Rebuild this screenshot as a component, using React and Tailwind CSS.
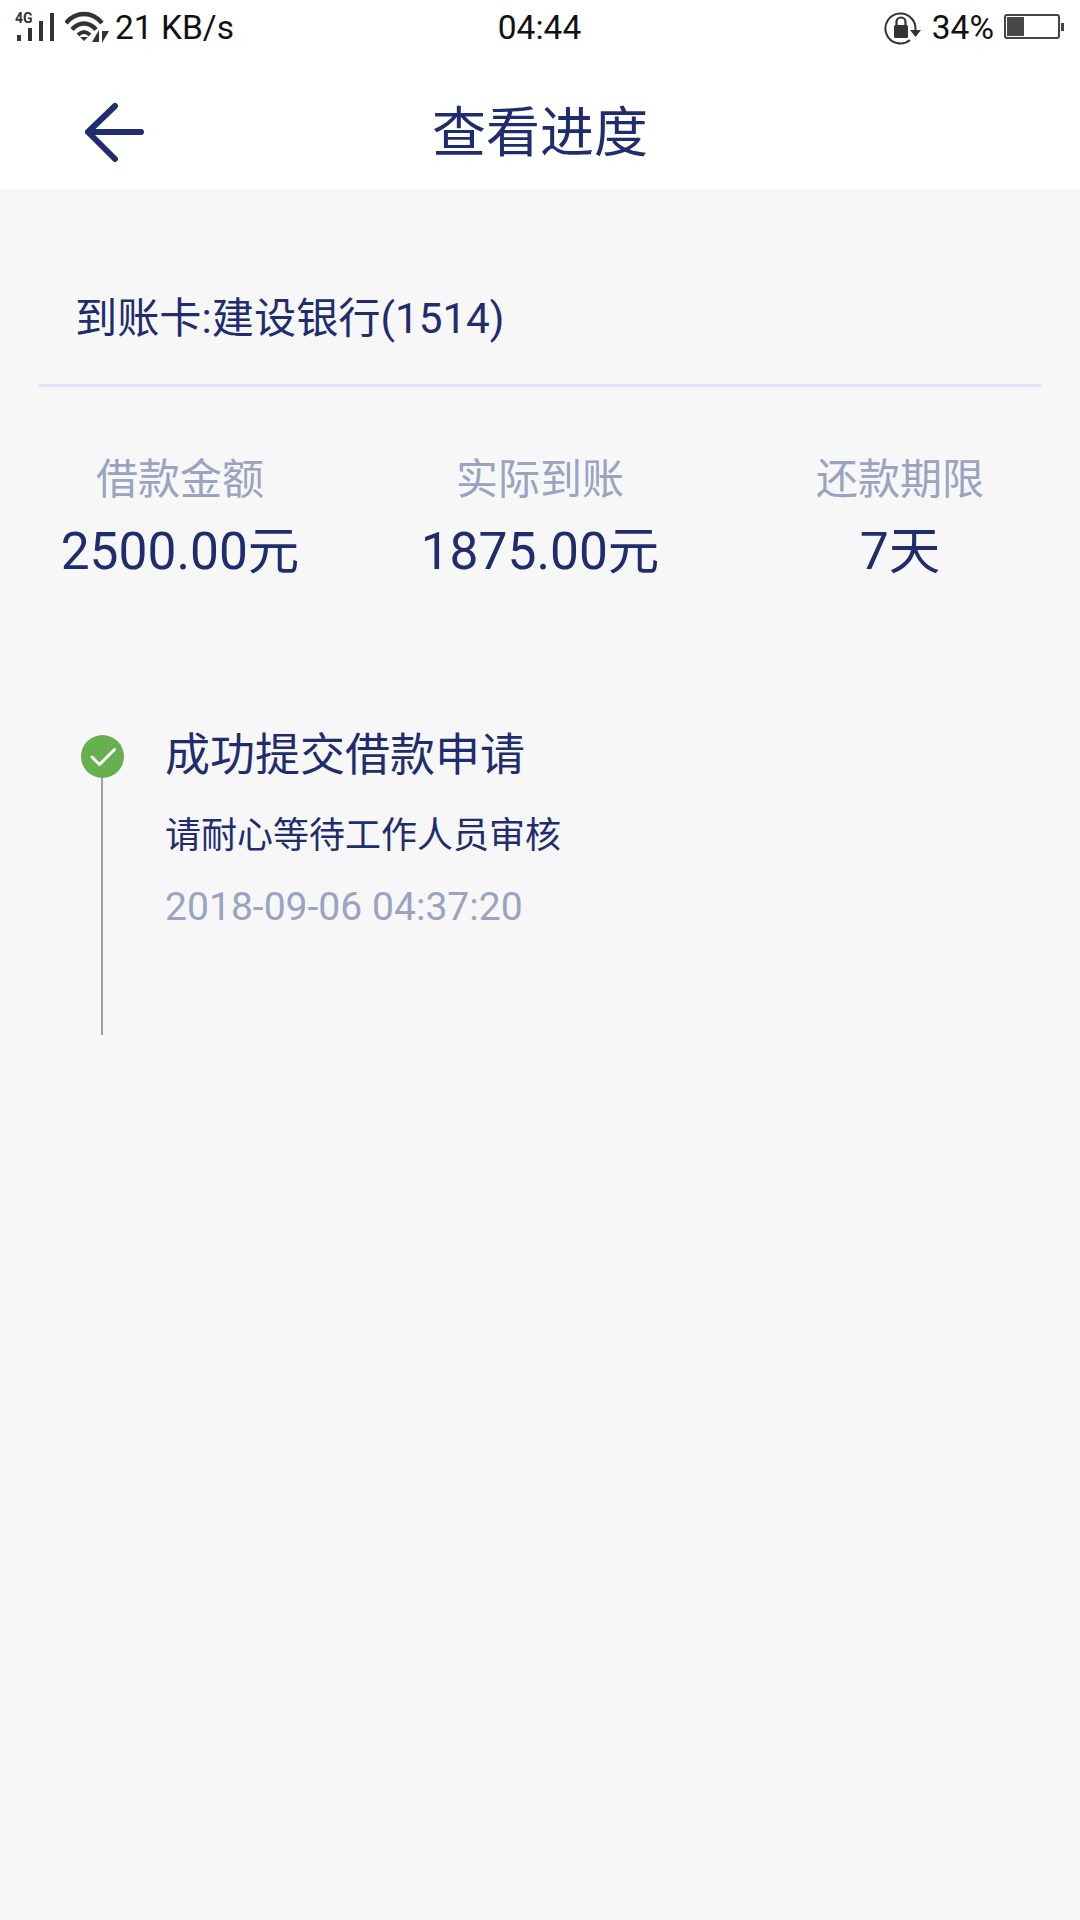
import React from 'react';

const summary = [
  { label: '借款金额', value: '2500.00元' },
  { label: '实际到账', value: '1875.00元' },
  { label: '还款期限', value: '7天' },
];

function SignalIcon() {
  return (
    <svg width="42" height="42" viewBox="0 0 42 42" className="shrink-0">
      <text x="0" y="16" fontSize="14" fontWeight="700" fontFamily="Roboto, sans-serif" fill="#333">4G</text>
      <rect x="2" y="28" width="4" height="6" fill="#333" />
      <rect x="13" y="21" width="4" height="13" fill="#333" />
      <rect x="24" y="14" width="4" height="20" fill="#333" />
      <rect x="35" y="6" width="4" height="28" fill="#333" />
    </svg>
  );
}

function WifiIcon() {
  return (
    <svg width="46" height="36" viewBox="0 0 46 36" className="shrink-0">
      <path d="M1 13 C11 1 27 1 37 13" fill="none" stroke="#333" strokeWidth="4.5" />
      <path d="M7 19.5 C14 11.5 24 11.5 31 19.5" fill="none" stroke="#333" strokeWidth="4.5" />
      <path d="M13 25 C17 21 21 21 25 25" fill="none" stroke="#333" strokeWidth="4" />
      <path d="M15 27 L23 27 L19 31 Z" fill="#333" />
      <path d="M34 20 L34 32 L27 32 Z" fill="#333" />
      <path d="M37 21 L37 33 L44 21 Z" fill="#333" />
    </svg>
  );
}

function RotationLockIcon() {
  return (
    <svg width="38" height="36" viewBox="0 0 38 36" className="shrink-0">
      <path d="M31 22 A15 15 0 1 0 26 30" fill="none" stroke="#333" strokeWidth="2" />
      <path d="M26 20 L37 20 L31.5 27 Z" fill="#333" />
      <rect x="10" y="15" width="14" height="13" rx="1.5" fill="#333" />
      <path d="M12.5 15 V12 A4.5 4.5 0 0 1 21.5 12 V15" fill="none" stroke="#333" strokeWidth="2.2" />
    </svg>
  );
}

function BatteryIcon() {
  return (
    <div className="flex items-center shrink-0 -mt-[3px]">
      <div className="w-[56px] h-[25px] border-2 border-[#444] rounded-[3px] p-[1px] bg-white">
        <div className="w-[17px] h-full bg-[#484848]" />
      </div>
      <div className="w-[3px] h-[8px] bg-[#444] ml-[1px]" />
    </div>
  );
}

export default function App() {
  return (
    <div className="w-[1080px] h-[1920px] flex flex-col bg-[#f7f7f7] text-[#1f2d6e] font-['Roboto','Noto_Sans_CJK_SC',sans-serif] overflow-hidden">
      <div className="bg-white h-[189px] shrink-0 flex flex-col">
        {/* status bar */}
        <div className="h-[56px] pl-[15px] pr-[16px] flex items-center justify-between text-[33.5px] text-[#111]">
          <div className="w-[340px] flex items-center gap-[8px]">
            <SignalIcon />
            <WifiIcon />
            <span className="-ml-[4px] mt-[1px]">21 KB/s</span>
          </div>
          <span className="mt-[1px]">04:44</span>
          <div className="w-[340px] flex items-center justify-end gap-[10px]">
            <RotationLockIcon />
            <span className="mt-[1px]">34%</span>
            <BatteryIcon />
          </div>
        </div>

        {/* nav */}
        <div className="flex-1 relative flex items-center justify-center pt-[22px]">
          <svg width="62" height="62" viewBox="0 0 62 62" className="absolute left-[83px] top-[45px]">
            <path d="M5 31 H58 M32 5 L5 31 L32 58" fill="none" stroke="#1f2d6e" strokeWidth="6" strokeLinecap="round" strokeLinejoin="round" />
          </svg>
          <h1 className="text-[54px] leading-none font-normal">查看进度</h1>
        </div>
      </div>

      <div className="h-[100px] mt-[80px] pl-[75px] flex items-center text-[42.2px]">
        到账卡:建设银行(1514)
      </div>
      <div className="mx-[39px] h-[3px] mt-[15px] bg-[#e2e4f6]" />

      <div className="mt-[68px] grid grid-cols-3 text-center">
        {summary.map((s) => (
          <div key={s.label} className="flex flex-col items-center">
            <span className="text-[42px] leading-[50px] text-[#9aa3c2]">{s.label}</span>
            <span className="text-[51.5px] leading-[60px] mt-[17px]">{s.value}</span>
          </div>
        ))}
      </div>

      {/* timeline */}
      <div className="mt-[153px] pl-[81px] flex">
        <div className="w-[43px] flex flex-col mr-[41px] h-[300px]">
          <div className="w-[43px] h-[43px] rounded-full bg-[#67b04f] flex items-center justify-center shrink-0">
            <svg width="28" height="22" viewBox="0 0 28 22">
              <path d="M3 11 L10.5 18.5 L25.5 3.5" fill="none" stroke="#fff" strokeWidth="3" strokeLinecap="round" strokeLinejoin="round" />
            </svg>
          </div>
          <div className="w-[2px] ml-[20px] flex-1 bg-[#a0a0a0]" />
        </div>
        <div className="flex flex-col -mt-[9px]">
          <span className="text-[45px] leading-[60px]">成功提交借款申请</span>
          <span className="text-[36px] leading-[48px] mt-[26px]">请耐心等待工作人员审核</span>
          <span className="text-[39.1px] leading-[48px] mt-[23px] text-[#9aa3c2]">2018-09-06 04:37:20</span>
        </div>
      </div>
    </div>
  );
}
